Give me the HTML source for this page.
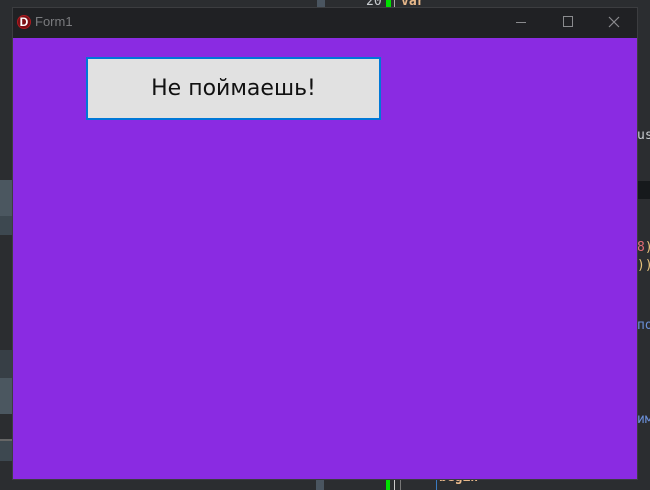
<!DOCTYPE html>
<html><head><meta charset="utf-8"><style>
*{margin:0;padding:0;box-sizing:border-box}
body{width:650px;height:490px;background:#2b2d30;position:relative;overflow:hidden;font-family:"Liberation Sans","DejaVu Sans",sans-serif}
.abs{position:absolute}
.mono{font-family:"DejaVu Sans Mono","Liberation Mono",monospace;font-size:13px}
</style></head><body>
<div class="abs" style="left:317px;top:0;width:8px;height:8px;background:#4a5560"></div>
<div class="abs mono" style="left:366px;top:-6px;color:#c8ccd0">20</div>
<div class="abs" style="left:386px;top:0;width:5px;height:8px;background:#00e000"></div>
<div class="abs" style="left:394px;top:0;width:1px;height:8px;background:#aaa"></div>
<div class="abs mono" style="left:401px;top:-6px;color:#e8b88a;font-weight:bold">var</div>
<div class="abs" style="left:0;top:180px;width:12px;height:36px;background:#4b5760"></div>
<div class="abs" style="left:0;top:216px;width:12px;height:19px;background:#3d4850"></div>
<div class="abs" style="left:0;top:350px;width:12px;height:28px;background:#373f46"></div>
<div class="abs" style="left:0;top:378px;width:12px;height:36px;background:#4b5760"></div>
<div class="abs" style="left:0;top:439px;width:12px;height:2px;background:#666"></div>
<div class="abs" style="left:0;top:441px;width:12px;height:20px;background:#3d4850"></div>
<div class="abs" style="left:637px;top:181px;width:13px;height:18px;background:#16191c"></div>
<div class="abs mono" style="left:637px;top:128px;color:#c8ccd0">us</div>
<div class="abs mono" style="left:637px;top:240px;color:#e06c75">8<span style="color:#e5c07b">)</span></div>
<div class="abs mono" style="left:637px;top:258px;color:#e5c07b">))</div>
<div class="abs mono" style="left:637px;top:318px;color:#6a8fd8">по</div>
<div class="abs mono" style="left:637px;top:412px;color:#6a8fd8">им</div>
<div class="abs" style="left:316px;top:479px;width:8px;height:11px;background:#4a5560"></div>
<div class="abs" style="left:386px;top:479px;width:4px;height:11px;background:#00e000"></div>
<div class="abs" style="left:394px;top:479px;width:1px;height:11px;background:#ccc"></div>
<div class="abs" style="left:400px;top:479px;width:1px;height:11px;background:#777"></div>
<div class="abs" style="left:436px;top:479px;width:1px;height:11px;background:#3a7ac0"></div>
<div class="abs mono" style="left:439px;top:470px;color:#e8b88a;font-weight:bold">begin</div>
<div class="abs" style="left:12px;top:7px;width:626px;height:473px;background:#202124;border:1px solid #3c3d40"></div>
<div class="abs" style="left:17px;top:15px;width:14px;height:14px;border-radius:50%;background:#7a0f14;border:1px solid #b01a20"></div>
<div class="abs" style="left:17px;top:14px;width:14px;height:16px;color:#fff;font-weight:bold;font-size:12px;text-align:center;line-height:16px">D</div>
<div class="abs" style="left:35px;top:14px;color:#7a7b7e;font-size:13px">Form1</div>
<div class="abs" style="left:516px;top:22px;width:10px;height:1px;background:#8a8b8e"></div>
<div class="abs" style="left:563px;top:16px;width:10px;height:11px;border:1px solid #8a8b8e"></div>
<svg class="abs" style="left:608px;top:16px" width="12" height="12"><path d="M1 1L11 11M11 1L1 11" stroke="#8a8b8e" stroke-width="1.2"/></svg>
<div class="abs" style="left:13px;top:38px;width:624px;height:441px;background:#8a2be2"></div>
<div class="abs" style="left:86px;top:57px;width:295px;height:63px;background:#e1e1e1;border:2px solid #0078d7;color:#111;font-size:22px;text-align:center;line-height:59px;font-family:'DejaVu Sans','Liberation Sans',sans-serif">Не поймаешь!</div>
</body></html>
